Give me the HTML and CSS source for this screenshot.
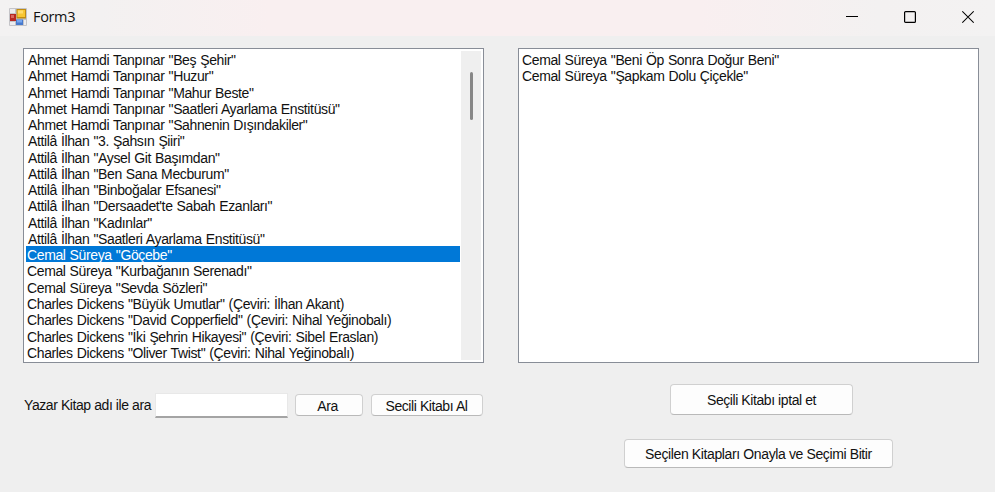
FILE: index.html
```html
<!DOCTYPE html>
<html lang="tr">
<head>
<meta charset="utf-8">
<title>Form3</title>
<link rel="stylesheet" href="styles.css">
</head>
<body>
<div class="window">
  <header class="titlebar">
    <svg class="app-icon" width="18" height="18" viewBox="0 0 18 18">
      <rect width="18" height="18" rx="1" fill="#c4c4c8"/>
      <path d="M1 1h5v4H1zM1 14h5v3H1zM15 12h2v5h-2z" fill="#ededf0"/>
      <rect x="1" y="6" width="6" height="7" fill="#b82822"/>
      <rect x="2" y="7" width="3" height="3" fill="#d8685f"/>
      <rect x="7.5" y="1" width="9.5" height="9.5" fill="#c08c12"/>
      <rect x="8.5" y="2" width="7.5" height="7" fill="#f8c632"/>
      <rect x="9" y="2.5" width="5" height="3" fill="#ffdc6c"/>
      <rect x="7" y="11.5" width="7" height="5.5" fill="#4779cd"/>
      <rect x="8" y="12" width="5" height="2.5" fill="#76a6ee"/>
    </svg>
    <h1 class="title">Form3</h1>
    <div class="controls">
      <svg width="12" height="14" viewBox="0 0 12 14"><path d="M0 6.5h12" stroke="#000"/></svg>
      <svg width="12" height="14" viewBox="0 0 12 14"><rect x=".6" y="1.6" width="10.8" height="10.8" rx="1" fill="none" stroke="#000" stroke-width="1.2"/></svg>
      <svg width="12" height="14" viewBox="0 0 12 14"><path d="M.3 1.3l11.4 11.4M11.7 1.3L.3 12.7" stroke="#000" stroke-width="1.1"/></svg>
    </div>
  </header>
  <main class="form">
    <section class="left">
      <div class="listbox">
        <ul class="items">
          <li class="inset">Ahmet Hamdi Tanpınar "Beş Şehir"</li>
          <li class="inset">Ahmet Hamdi Tanpınar "Huzur"</li>
          <li class="inset">Ahmet Hamdi Tanpınar "Mahur Beste"</li>
          <li class="inset">Ahmet Hamdi Tanpınar "Saatleri Ayarlama Enstitüsü"</li>
          <li class="inset">Ahmet Hamdi Tanpınar "Sahnenin Dışındakiler"</li>
          <li class="inset">Attilâ İlhan "3. Şahsın Şiiri"</li>
          <li class="inset">Attilâ İlhan "Aysel Git Başımdan"</li>
          <li class="inset">Attilâ İlhan "Ben Sana Mecburum"</li>
          <li class="inset">Attilâ İlhan "Binboğalar Efsanesi"</li>
          <li class="inset">Attilâ İlhan "Dersaadet'te Sabah Ezanları"</li>
          <li class="inset">Attilâ İlhan "Kadınlar"</li>
          <li class="inset">Attilâ İlhan "Saatleri Ayarlama Enstitüsü"</li>
          <li class="selected">Cemal Süreya "Göçebe"</li>
          <li>Cemal Süreya "Kurbağanın Serenadı"</li>
          <li>Cemal Süreya "Sevda Sözleri"</li>
          <li>Charles Dickens "Büyük Umutlar" (Çeviri: İlhan Akant)</li>
          <li>Charles Dickens "David Copperfield" (Çeviri: Nihal Yeğinobalı)</li>
          <li>Charles Dickens "İki Şehrin Hikayesi" (Çeviri: Sibel Eraslan)</li>
          <li>Charles Dickens "Oliver Twist" (Çeviri: Nihal Yeğinobalı)</li>
        </ul>
        <div class="scrollbar"><div class="thumb"></div></div>
      </div>
      <div class="search">
        <label class="label" for="q">Yazar Kitap adı ile ara</label>
        <input class="field" id="q" type="text">
        <button class="btn find">Ara</button>
        <button class="btn take">Secili Kitabı Al</button>
      </div>
    </section>
    <section class="right">
      <div class="listbox">
        <ul class="items">
          <li>Cemal Süreya "Beni Öp Sonra Doğur Beni"</li>
          <li>Cemal Süreya "Şapkam Dolu Çiçekle"</li>
        </ul>
      </div>
      <button class="btn cancel">Seçili Kitabı iptal et</button>
      <button class="btn confirm">Seçilen Kitapları Onayla ve Seçimi Bitir</button>
    </section>
  </main>
</div>
</body>
</html>
```
FILE: styles.css
```css
* { box-sizing: border-box; }
body { margin: 0; background: #efefef; }
.window {
  width: 995px; height: 492px; overflow: hidden;
  background: #efefef; color: #111;
  font: 14px "Liberation Sans", Arial, sans-serif;
  letter-spacing: -0.42px;
}
.titlebar {
  height: 36px; padding: 0 21px 2px 9px;
  display: flex; align-items: center;
  background: linear-gradient(90deg, #f3f2f2 0, #f3f1f1 100px, #f9eff0 270px, #f9eff0 700px, #f3f1f1 880px, #f3f2f2);
}
.title { margin: -2px 0 0 6px; font: 14.5px "Open Sans", "Noto Sans", sans-serif; letter-spacing: -0.35px; }
.controls { margin-left: auto; display: flex; gap: 46px; }
.controls svg { display: block; }
.form { display: flex; gap: 34px; padding: 12px 16px 0 23px; }
.left { width: 461px; }
.right { width: 461px; display: flex; flex-direction: column; align-items: center; }
.listbox {
  width: 461px; height: 315px; display: flex;
  background: #fff; border: 1px solid #888d97; padding: 2px;
}
.items { flex: 1; margin: 0; padding: 0; list-style: none; letter-spacing: -0.37px; word-spacing: 0.5px; }
.items li { height: 16.28px; line-height: 18px; padding-left: 1px; white-space: nowrap; }
.items .inset { padding-left: 2px; }
.items .selected { background: #0078d7; color: #fff; }
.scrollbar { width: 20px; margin-left: 1px; background: #efefef; }
.thumb { width: 3px; height: 48px; margin: 21px 0 0 9px; border-radius: 2px; background: #878787; }
.search { display: flex; align-items: flex-start; padding-top: 30px; }
.label { width: 132px; padding: 4px 0 0 1px; line-height: 17px; white-space: nowrap; }
.field {
  width: 133px; height: 25px; border: 1px solid #e8e8e8;
  border-bottom: 2px solid #a4a4a4; background: #fff; padding: 2px;
}
.btn {
  padding: 1px 0 0; border: 1px solid #d0d0d0; border-bottom-color: #b9b9b9; border-radius: 4px;
  background: #fdfdfd; color: #111; font: inherit; letter-spacing: inherit; white-space: nowrap;
}
.find { width: 68px; height: 22px; margin: 1px 8px 0 7px; padding: 2px 3px 0 0; }
.take { width: 112px; height: 22px; margin-top: 1px; padding: 2px 1px 0 0; }
.cancel { width: 183px; height: 31px; margin: 21px 0 0 26px; }
.confirm { width: 269px; height: 29px; margin: 24px 0 0 20px; letter-spacing: -0.38px; }
```
